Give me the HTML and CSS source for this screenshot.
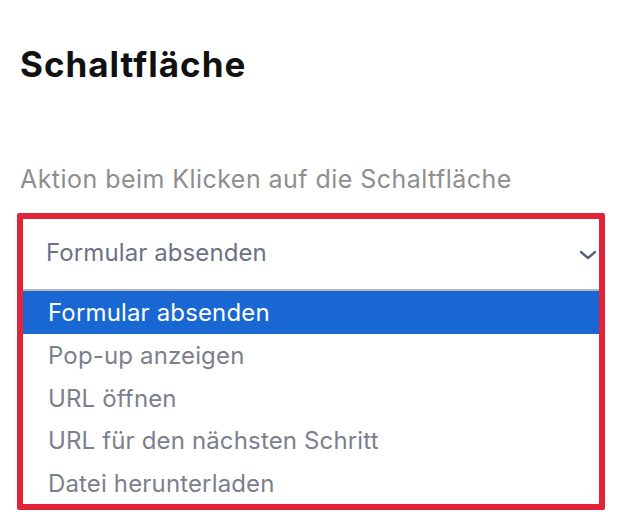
FILE: index.html
```html
<!DOCTYPE html>
<html lang="de">
<head>
<meta charset="utf-8">
<link rel="stylesheet" href="styles.css">
</head>
<body>
<div class="page">
  <h1 class="title">Schaltfläche</h1>
  <div class="label">Aktion beim Klicken auf die Schaltfläche</div>
  <div class="box">
    <div class="select">
      <span class="value">Formular absenden</span>
      <svg class="chev" width="18" height="10" viewBox="0 0 18 10"><path d="M2 2 L9 8 L16 2" fill="none" stroke="#5b6478" stroke-width="2.4" stroke-linecap="round" stroke-linejoin="round"/></svg>
    </div>
    <ul class="list">
      <li class="opt active">Formular absenden</li>
      <li class="opt">Pop-up anzeigen</li>
      <li class="opt">URL öffnen</li>
      <li class="opt">URL für den nächsten Schritt</li>
      <li class="opt">Datei herunterladen</li>
    </ul>
  </div>
</div>
</body>
</html>
```

FILE: styles.css
```css
html, body {
  margin: 0;
  padding: 0;
  background: #ffffff;
}
body {
  font-family: "Inter", "Noto Sans", sans-serif;
}
.page {
  padding: 42px 20px 0 17px;
}
.title {
  margin: 0 0 0 3px;
  font-size: 35px;
  font-weight: 700;
  letter-spacing: 1px;
  color: #111111;
  line-height: 44px;
}
.label {
  margin: 78px 0 0 3px;
  font-size: 25px;
  letter-spacing: 0.45px;
  color: #8e8e8e;
  line-height: 30px;
}
.box {
  margin-top: 19px;
  width: 576px;
  border: 6px solid #e1243a;
  border-radius: 2px;
}
.select {
  height: 70px;
  display: flex;
  align-items: center;
  justify-content: space-between;
  padding: 0 2px 3px 23px;
  box-sizing: border-box;
}
.value {
  font-size: 24px;
  letter-spacing: 0.1px;
  color: #6c7285;
}
.chev {
  display: block;
  margin-top: 4px;
}
.list {
  list-style: none;
  margin: 0;
  padding: 0;
  border-top: 2px solid #b9b9b9;
}
.opt {
  height: 42.5px;
  line-height: 44px;
  padding-left: 25px;
  font-size: 24px;
  letter-spacing: 0.15px;
  color: #7b808c;
}
.opt.active {
  background: #1967d2;
  color: #ffffff;
  height: 43px;
  line-height: 44px;
}
```
